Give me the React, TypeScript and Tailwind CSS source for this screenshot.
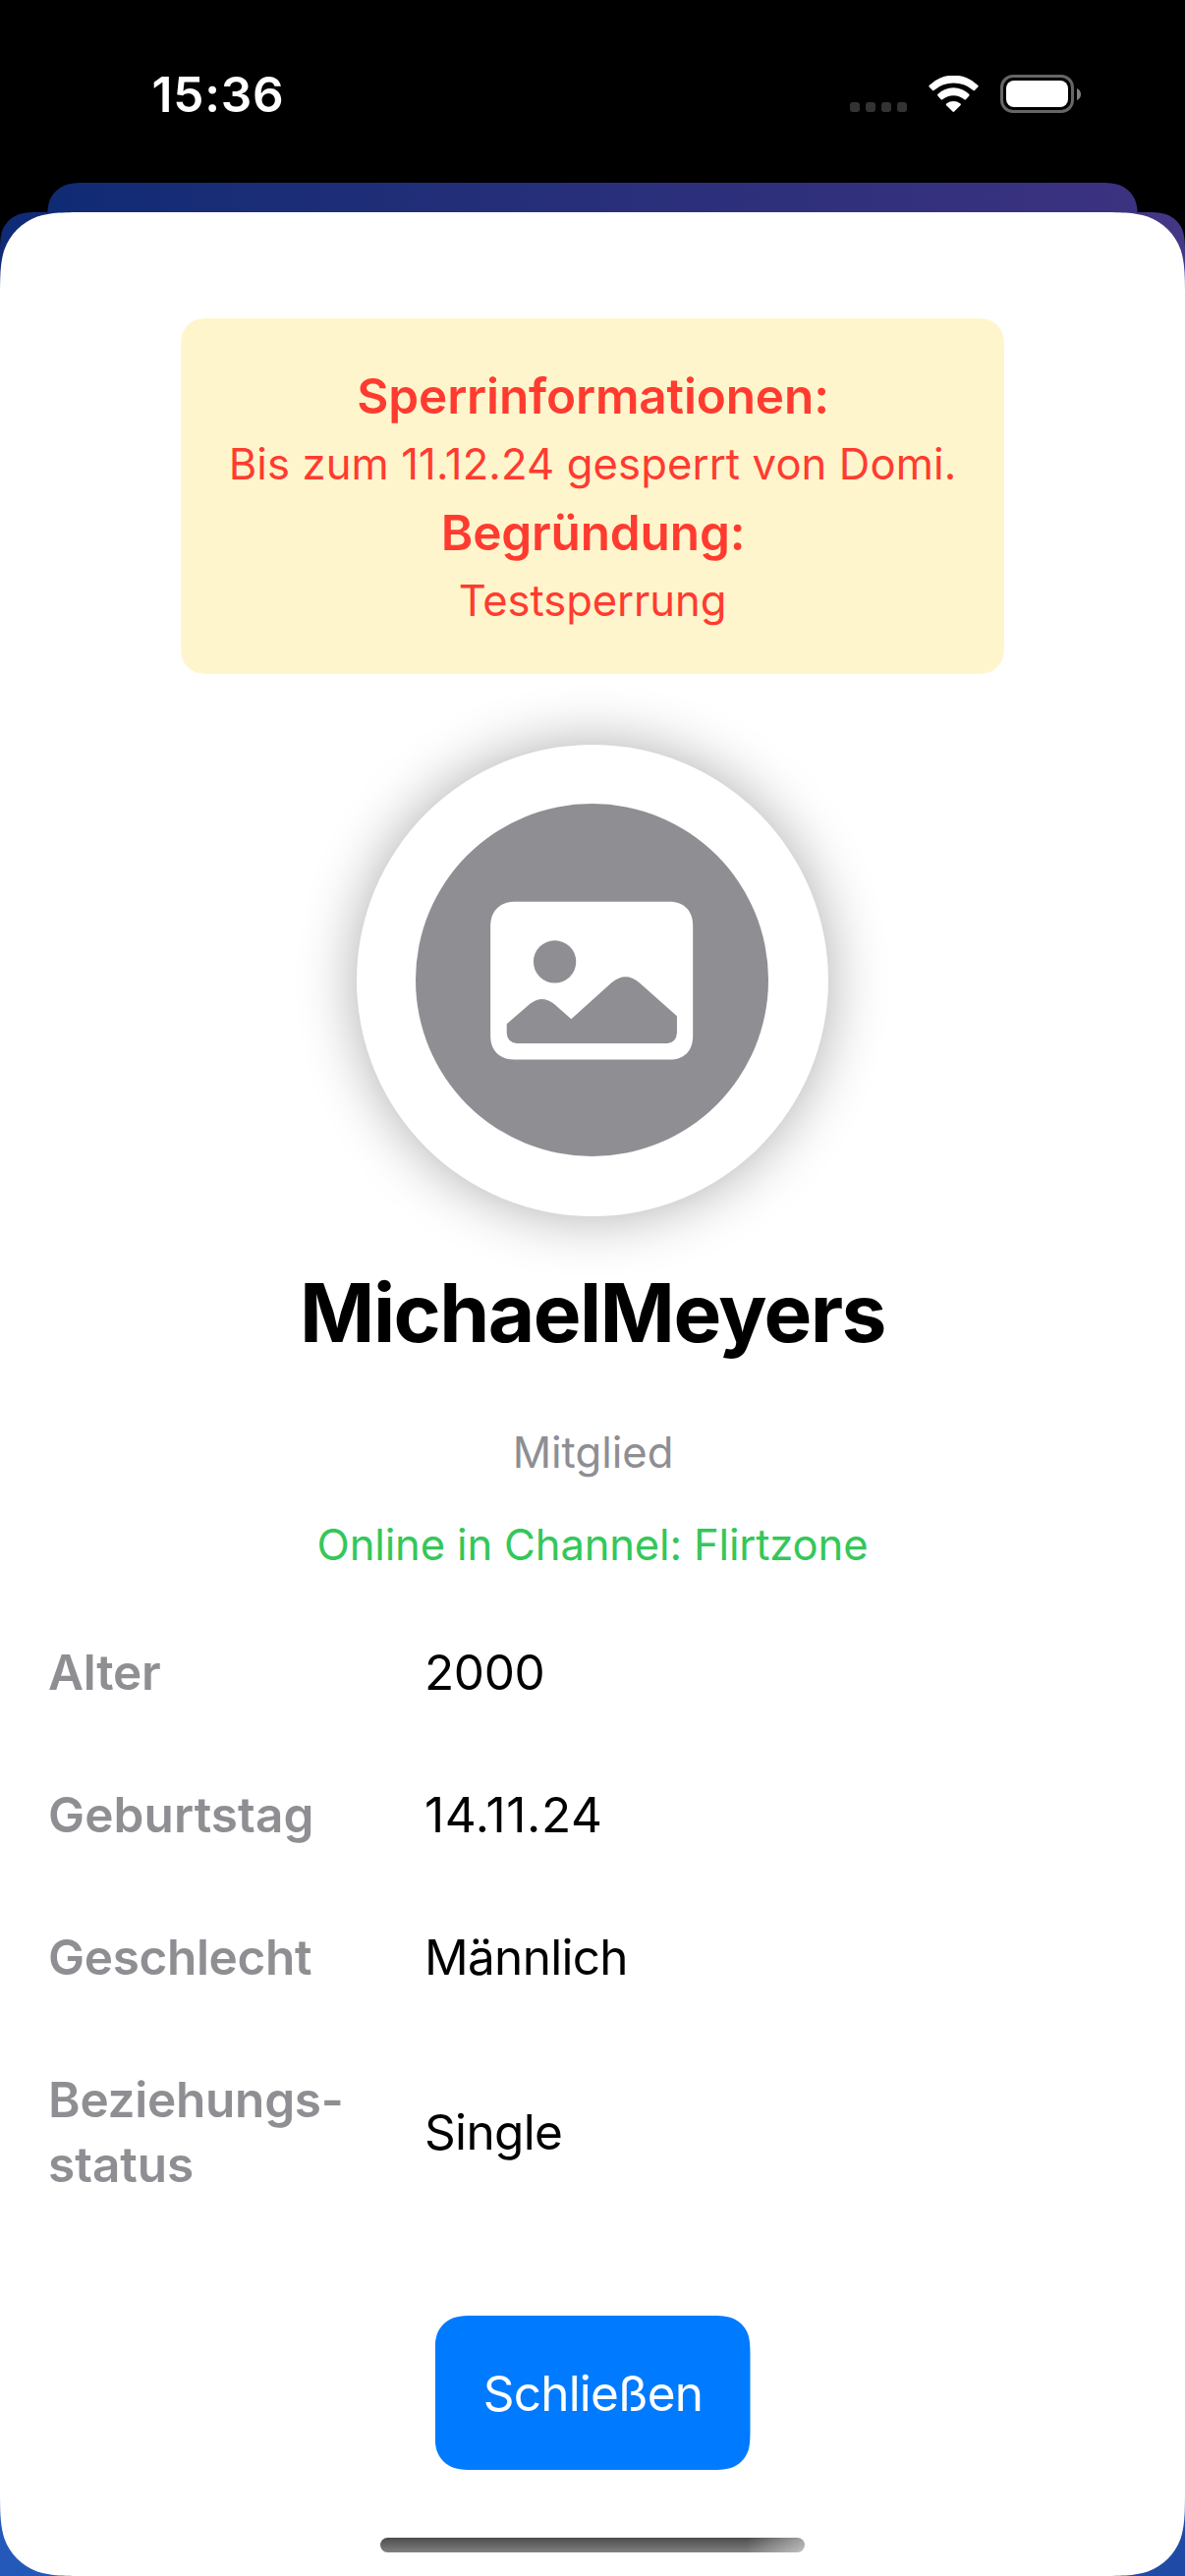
import { useLayoutEffect, useRef, useState } from 'react';
import type { ReactNode } from 'react';

// Corner with continuous curvature, as path commands for a w × h box.
function smoothRect(w: number, h: number, r: number, roundBottom = true) {
  const a = 1.528665 * r;
  const b = 1.08849296 * r;
  const c = 0.86840694 * r;
  const d = 0.63149379 * r;
  const e = 0.37282383 * r;
  const f = 0.16905956 * r;
  const g = 0.07491139 * r;
  const top =
    `M${a} 0 L${w - a} 0 C${w - b} 0 ${w - c} 0 ${w - d} ${g} C${w - e} ${f} ${w - f} ${e} ${w - g} ${d} ` +
    `C${w} ${c} ${w} ${b} ${w} ${a}`;
  const bottom = roundBottom
    ? `L${w} ${h - a} C${w} ${h - b} ${w} ${h - c} ${w - g} ${h - d} C${w - f} ${h - e} ${w - e} ${h - f} ${w - d} ${h - g} ` +
      `C${w - c} ${h} ${w - b} ${h} ${w - a} ${h} L${a} ${h} C${b} ${h} ${c} ${h} ${d} ${h - g} ` +
      `C${e} ${h - f} ${f} ${h - e} ${g} ${h - d} C0 ${h - c} 0 ${h - b} 0 ${h - a}`
    : `L${w} ${h} L0 ${h}`;
  return `path("${top} ${bottom} L0 ${a} C0 ${b} 0 ${c} ${g} ${d} C${f} ${e} ${e} ${f} ${d} ${g} C${c} 0 ${b} 0 ${a} 0 Z")`;
}

type SmoothProps = { radius: number; roundBottom?: boolean; className: string; children?: ReactNode };

function Smooth({ radius, roundBottom = true, className, children }: SmoothProps) {
  const ref = useRef<HTMLDivElement>(null);
  const [clip, setClip] = useState<string>();
  useLayoutEffect(() => {
    const el = ref.current;
    if (el) setClip(smoothRect(el.offsetWidth, el.offsetHeight, radius, roundBottom));
  }, [radius, roundBottom]);
  return (
    <div ref={ref} className={className} style={{ clipPath: clip }}>
      {children}
    </div>
  );
}

function StatusBar() {
  return (
    <header className="flex h-[186px] items-start justify-between pr-[106px] pl-[154.5px] text-white">
      <span className="mt-[63px] text-[49.5px] leading-[66px] font-semibold tracking-[0.79px]">15:36</span>
      <div className="mt-[76px] flex h-[39px] items-start">
        <div className="mt-[28px] flex gap-[6px]">
          {[0, 1, 2, 3].map((dot) => (
            <span key={dot} className="size-[10px] rounded-[3px] bg-[#333333]" />
          ))}
        </div>
        <svg className="mt-px ml-[22px] h-[37px] w-[51px]" viewBox="426.5 231 153 111" fill="#fff">
          <path d="M429 266Q426 263 429 260A106 106 0 0 1 577 260Q580 263 577 266L568 275Q565 278 562 275A92 92 0 0 0 444 275Q441 278 438 275Z" />
          <path d="M455 293Q452 290 455 287A69 69 0 0 1 550 287Q553 290 550 293L541 303Q538 306 535 303A52 52 0 0 0 470 303Q467 306 464 303Z" />
          <path d="M481 321.500Q478 318.500 482 316A34 34 0 0 1 523 316Q527 318.500 524 321.500L505 340.500Q502.500 343 500 340.500Z" />
        </svg>
        <div className="ml-[22px] flex items-center">
          <div className="h-[39px] w-[75px] rounded-[13px] border-[3px] border-[#666666] p-[3px]">
            <div className="h-full w-full rounded-[8px] bg-white" />
          </div>
          <svg className="ml-[3px] h-[12px] w-[4px]" viewBox="0 0 4 12" fill="#808080">
            <path d="M0 0C2.500 1 4 3.300 4 6S2.500 11 0 12Z" />
          </svg>
        </div>
      </div>
    </header>
  );
}

function BanNotice() {
  return (
    <Smooth
      radius={24}
      className="mt-[108px] h-[362px] w-[838px] bg-[#fff5cc] pt-[43px] text-center text-[#ff3b30]"
    >
      <h2 className="pl-px text-[49.5px] leading-[72px] font-semibold tracking-[-0.15px]">Sperrinformationen:</h2>
      <p className="text-[43.6px] leading-[67px] tracking-[0.11px]">Bis zum 11.12.24 gesperrt von Domi.</p>
      <h2 className="pl-px text-[49.5px] leading-[72px] font-semibold tracking-[-0.15px]">Begründung:</h2>
      <p className="text-[43.6px] leading-[67px] tracking-[-0.1px]">Testsperrung</p>
    </Smooth>
  );
}

function Avatar() {
  return (
    <div className="mt-[72px] flex size-[480px] items-center justify-center rounded-full bg-white shadow-[0_0_60px_rgba(0,0,0,0.33)]">
      <svg className="-mt-px -ml-px size-[359px]" viewBox="246 260 1061 1061">
        <circle cx="776.5" cy="790.5" r="530.5" fill="#8e8e93" />
        <path
          fill="#fff"
          d="M544 555H1009C1054 555 1080 583 1080 628V958C1080 1003 1054 1030 1009 1030H544C499 1030 471 1003 471 958V628C471 583 499 555 544 555Z"
        />
        <circle cx="664.5" cy="735.5" r="64" fill="#8e8e93" />
        <path
          fill="#8e8e93"
          d="M520 923L590 862Q626 834 662 862L714 908L836 798Q878 764 918 798L1032 899V950Q1030 978 1003 981H550Q522 978 520 950Z"
        />
      </svg>
    </div>
  );
}

function Row({ label, value }: { label: ReactNode; value: ReactNode }) {
  return (
    <div className="flex items-center text-[49.5px] leading-[66px]">
      <dt className="w-[383px] font-semibold text-[#8e8e93]">{label}</dt>
      <dd className="text-black">{value}</dd>
    </div>
  );
}

export default function App() {
  return (
    <div className="flex h-[2622px] w-[1206px] flex-col overflow-hidden bg-black font-[Inter,'Liberation_Sans',sans-serif]">
      <StatusBar />
      <Smooth
        radius={30}
        roundBottom={false}
        className="mx-[48px] h-[30px] shrink-0 bg-linear-to-r from-[#0f2b74] to-[#3b3280]"
      />
      <Smooth
        radius={30}
        roundBottom={false}
        className="h-[2406px] bg-[linear-gradient(to_right,#2459b9,#1f4aa5),linear-gradient(to_right,#0f2b76,#443785)] bg-[length:100%_200px,100%_100%] bg-bottom bg-no-repeat"
      >
        <Smooth radius={60} className="flex h-full w-full flex-col items-center bg-white">
          <BanNotice />
          <Avatar />
          <h1 className="mt-[49px] text-[82px] leading-[100px] font-bold tracking-[-1.58px] text-black">MichaelMeyers</h1>
          <p className="mt-[62px] pl-px text-[43.6px] leading-[60px] text-[#8e8e93]">Mitglied</p>
          <p className="mt-[34px] text-[43.6px] leading-[60px] tracking-[-0.17px] text-[#34c759]">
            Online in Channel: Flirtzone
          </p>
          <dl className="mt-[66px] flex flex-col gap-[79px] self-stretch pl-[49px]">
            <Row
              label={<span className="tracking-[-0.24px]">Alter</span>}
              value={<span className="tracking-[-0.38px]">2000</span>}
            />
            <Row
              label={<span className="tracking-[0.11px]">Geburtstag</span>}
              value={<span className="tracking-[0.66px]">14.11.24</span>}
            />
            <Row
              label={<span className="tracking-[-0.34px]">Geschlecht</span>}
              value={<span className="tracking-[-0.7px]">Männlich</span>}
            />
            <Row
              label={
                <>
                  <span className="tracking-[-0.25px]">Beziehungs-</span>
                  <br />
                  status
                </>
              }
              value={<span className="tracking-[-0.67px]">Single</span>}
            />
          </dl>
          <button type="button" className="mt-[121px]">
            <Smooth
              radius={30}
              className="flex h-[157px] w-[321px] items-center justify-center bg-[#007aff] pl-px text-[49.5px] leading-[66px] tracking-[-0.81px] text-white"
            >
              Schließen
            </Smooth>
          </button>
          <div className="mt-[69px] h-[15px] w-[432px] rounded-full bg-[linear-gradient(100deg,transparent_86%,rgba(255,255,255,0.5)),linear-gradient(to_bottom,#4c4c4c,#808080)]" />
        </Smooth>
      </Smooth>
    </div>
  );
}
